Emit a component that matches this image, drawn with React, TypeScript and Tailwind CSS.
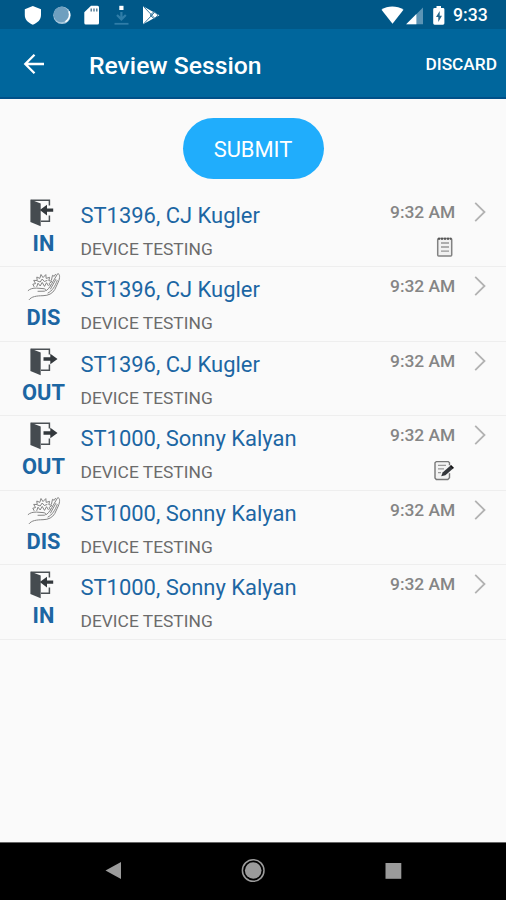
import React from "react";

type Kind = "IN" | "DIS" | "OUT";

interface Entry {
  kind: Kind;
  name: string;
  note?: "list" | "edit";
}

const entries: Entry[] = [
  { kind: "IN", name: "ST1396, CJ Kugler", note: "list" },
  { kind: "DIS", name: "ST1396, CJ Kugler" },
  { kind: "OUT", name: "ST1396, CJ Kugler" },
  { kind: "OUT", name: "ST1000, Sonny Kalyan", note: "edit" },
  { kind: "DIS", name: "ST1000, Sonny Kalyan" },
  { kind: "IN", name: "ST1000, Sonny Kalyan" },
];

const DoorIcon = ({ out }: { out?: boolean }) => (
  <svg width="30" height="29" viewBox="0 0 30 29" fill="none">
    <path d="M2 2.3H20.4V7.5M20.4 17.5V23.3H12" stroke="#4b5054" strokeWidth="1.5" />
    <path d="M1.4 1.5L11.7 5.5V28.2L1.4 24Z" fill="#454b50" />
    {out ? (
      <path d="M14.5 10.3H21.3V6.7L28.5 12L21.3 17.3V13.7H14.5Z" fill="#33383c" />
    ) : (
      <path d="M24.2 10.4H18V6.8L10.8 12.1L18 17.4V13.8H24.2Z" fill="#33383c" />
    )}
  </svg>
);

const HandsIcon = () => (
  <svg width="36" height="30" viewBox="0 0 36 30" fill="none" stroke="#858585" strokeWidth="1" strokeLinecap="round" strokeLinejoin="round">
    <path d="M2.2 18.5C4 16.8 7 16 10.5 16.1L17 16.6C20 16.8 21 18.5 18.5 19.2L12 19.3M20.5 18.5C23.5 16.4 25.2 12.5 27.2 9.2L31.7 1.7C34.2 1.7 34 6 32.3 10L28.8 17.5C26.5 21.5 22.5 23.6 17 23.7C10.5 23.8 5.5 24.5 3.2 27.6" />
    <path d="M22 21C26.2 19 29 14.5 31.2 8.5M24.5 17L29.8 7.5" />
    <path d="M8 14.5L6.8 12.2L9.6 11.6L7.7 8.4L11.2 8.5L10.8 5L13.8 6.4L15 2.5L17 5.6L19.8 2.6L20.2 6.4L23.6 5.3L22.8 8.6L26 9.3L23.2 11.5L24.5 14" />
    <path d="M10.8 14.5L12 11.2L14.2 14L16.2 10.4L18.5 14.4L20.5 10.7L22.3 13.6M11.5 9L14.2 10L16.2 7L18.3 9.5L21 8.5M25.5 8L26.5 3.3L28.2 4.3L29.5 2.3" />
  </svg>
);

const NoteIcon = ({ edit }: { edit?: boolean }) => (
  <svg width="22" height="22" viewBox="0 0 22 22" fill="none">
    {edit ? (
      <>
        <path d="M16.5 14.2V18.8L14.8 20.5H3.3L2 19.1V3.8L3.3 2.6H15.3L16.5 3.8V6.2" fill="#f3f3f3" stroke="#777" strokeWidth="1.4" />
        <path d="M5 6.4H13M5 9.9H11M5 13.6H8" stroke="#999" strokeWidth="1.1" />
        <path d="M8.2 17.3L9.6 13.6L17.6 6.5L20.4 9.3L12.4 16.2Z" fill="#34373b" />
        <path d="M17.6 6.5L20.4 9.3" stroke="#111" strokeWidth="1.5" />
      </>
    ) : (
      <>
        <rect x="4.7" y="2.6" width="14" height="17.4" rx="1" fill="#f1f1f1" stroke="#828282" strokeWidth="1.5" />
        <path d="M5 2.7H18.5" stroke="#555" strokeWidth="2" strokeDasharray="2 1" />
        <path d="M8 7H16M8 11H16M8 15.2H16" stroke="#969696" strokeWidth="1.3" />
      </>
    )}
  </svg>
);

const StatusBar = () => (
  <div className="h-[29px] shrink-0 bg-[#005888] flex items-center justify-between pl-[23px] pr-[19px] pt-0.5">
    <div className="flex items-center">
      <svg width="140" height="22" viewBox="0 0 140 22">
        <path d="M9.8 1L18 4.2V10C18 14.7 14.5 17.9 9.8 19.7C5.2 17.9 1.8 14.7 1.8 10V4.2Z" fill="#fff" />
        <circle cx="39" cy="10.3" r="8.7" fill="#a6c7dc" />
        <circle cx="38.2" cy="9.5" r="7.7" fill="#6e9fbf" />
        <path d="M42.5 16.8C46 14.5 47.5 10.5 46 6.3" stroke="#fff" strokeWidth="1.4" fill="none" />
        <path d="M68 0.8H74.5Q76 0.8 76 2.3V18.1Q76 19.6 74.5 19.6H62.8Q61.3 19.6 61.3 18.1V7.3Z" fill="#fff" />
        <path d="M68.2 3.5V6.5M71 3.5V6.5M73.8 3.5V6.5" stroke="#426d87" strokeWidth="1.3" />
        <rect x="96.3" y="0.8" width="4.2" height="4.2" fill="#fff" />
        <path d="M98.4 7V14M94 10L98.4 14.4L102.8 10" stroke="#2f7da8" strokeWidth="2.2" fill="none" />
        <path d="M91.5 18.8H105.5" stroke="#2f7da8" strokeWidth="1.8" />
        <path d="M120 1.2L136.4 10.2L120 19.3Z" fill="#fff" />
        <path d="M120.5 1.5L131.5 13M120.5 19L131.5 7.4M127 10.2L131.2 6.5L135 10.2L131.2 13.9Z" stroke="#3a7ba0" strokeWidth="1" fill="none" />
      </svg>
    </div>
    <div className="flex items-center">
      <svg width="65" height="22" viewBox="0 0 65 22" className="mr-[7px]">
        <path d="M0.5 4.8C6.5 0.4 16 0.4 22.5 4.8L11.5 18.8Z" fill="#fff" />
        <path d="M42 2.5V19.2H25.2Z" fill="#5c94b5" />
        <path d="M35.4 9.1V19.2H25.2Z" fill="#fff" />
        <path d="M55.5 1H60V3H62Q63.4 3 63.4 4.4V18.3Q63.4 19.7 62 19.7H53.6Q52.2 19.7 52.2 18.3V4.4Q52.2 3 53.6 3H55.5Z" fill="#fff" />
        <path d="M58.7 6L55 12H57.3V17L61 10.7H58.7Z" fill="#23658b" />
      </svg>
      <span className="text-[17.6px] leading-none font-medium text-white w-[34px] pt-px whitespace-nowrap">9:33</span>
    </div>
  </div>
);

const Row = ({ entry }: { entry: Entry }) => (
  <div className="flex h-[74.5px] border-b border-[#eeeeee]">
    <div className="w-[80.5px] shrink-0 pl-[5px] pt-[5px]">
      <div className="h-[32px] w-[77px] flex justify-center items-start">
        {entry.kind === "DIS" ? (
          <HandsIcon />
        ) : (
          <DoorIcon out={entry.kind === "OUT"} />
        )}
      </div>
      <div className="w-[77px] text-center text-[21.8px] leading-[28px] font-bold text-[#1c66a3]">
        {entry.kind}
      </div>
    </div>
    <div className="flex-1 pt-[8px] whitespace-nowrap">
      <div className="text-[21.95px] leading-[30px] text-[#1c66a3]">{entry.name}</div>
      <div className="mt-[6px] text-[17.4px] leading-[24px] text-[#6b6b6b]">DEVICE TESTING</div>
    </div>
    <div className="w-[66px] shrink-0 pt-[8px]">
      <div className="text-[17.4px] leading-[22px] font-medium text-[#858585] whitespace-nowrap">9:32 AM</div>
      <div className="mt-[13px] ml-[43px]">
        {entry.note && <NoteIcon edit={entry.note === "edit"} />}
      </div>
    </div>
    <div className="w-[50px] shrink-0 pt-[8px] pl-[17px]">
      <svg width="14" height="22" viewBox="0 0 14 22" fill="none">
        <path d="M2.2 1.8L11.5 11L2.2 20.2" stroke="#b2b2b2" strokeWidth="1.8" />
      </svg>
    </div>
  </div>
);

const App = () => {
  return (
    <div className="w-[506px] h-[900px] flex flex-col bg-[#fafafa] overflow-hidden font-['Roboto',sans-serif]">
      <StatusBar />
      <header className="h-[70px] shrink-0 bg-[#00669c] border-b-2 border-[#005089] flex items-center pl-[23px] pr-[9px] text-white">
        <svg width="22" height="22" viewBox="0 0 22 22" fill="none" stroke="#fff" strokeWidth="2.3" className="mt-[2px]">
          <path d="M21 11H3M11.5 1.8L2.3 11L11.5 20.2" />
        </svg>
        <h1 className="ml-[44px] mt-[6px] text-[24.7px] leading-none font-medium flex-1">Review Session</h1>
        <button className="text-[17.3px] font-medium mt-[4px]">DISCARD</button>
      </header>
      <div className="h-[93.5px] shrink-0 flex justify-center pt-[19px]">
        <button className="w-[141px] h-[61px] rounded-full bg-[#20adfc] text-white text-[21.9px] pt-[3px]">
          SUBMIT
        </button>
      </div>
      <main className="flex-1">
        {entries.map((entry, i) => (
          <Row key={i} entry={entry} />
        ))}
      </main>
      <nav className="h-[58px] shrink-0 bg-black border-t border-[#666] flex items-center pb-px">
        <svg width="506" height="30" viewBox="0 0 506 30">
          <path d="M105.5 14.5L121 6V23Z" fill="#9b9b9b" />
          <circle cx="253.2" cy="14.5" r="10.8" fill="none" stroke="#9b9b9b" strokeWidth="1.5" />
          <circle cx="253.2" cy="14.5" r="8.3" fill="#9b9b9b" />
          <rect x="385.5" y="7" width="15.8" height="15.8" fill="#9b9b9b" />
        </svg>
      </nav>
    </div>
  );
};

export default App;
